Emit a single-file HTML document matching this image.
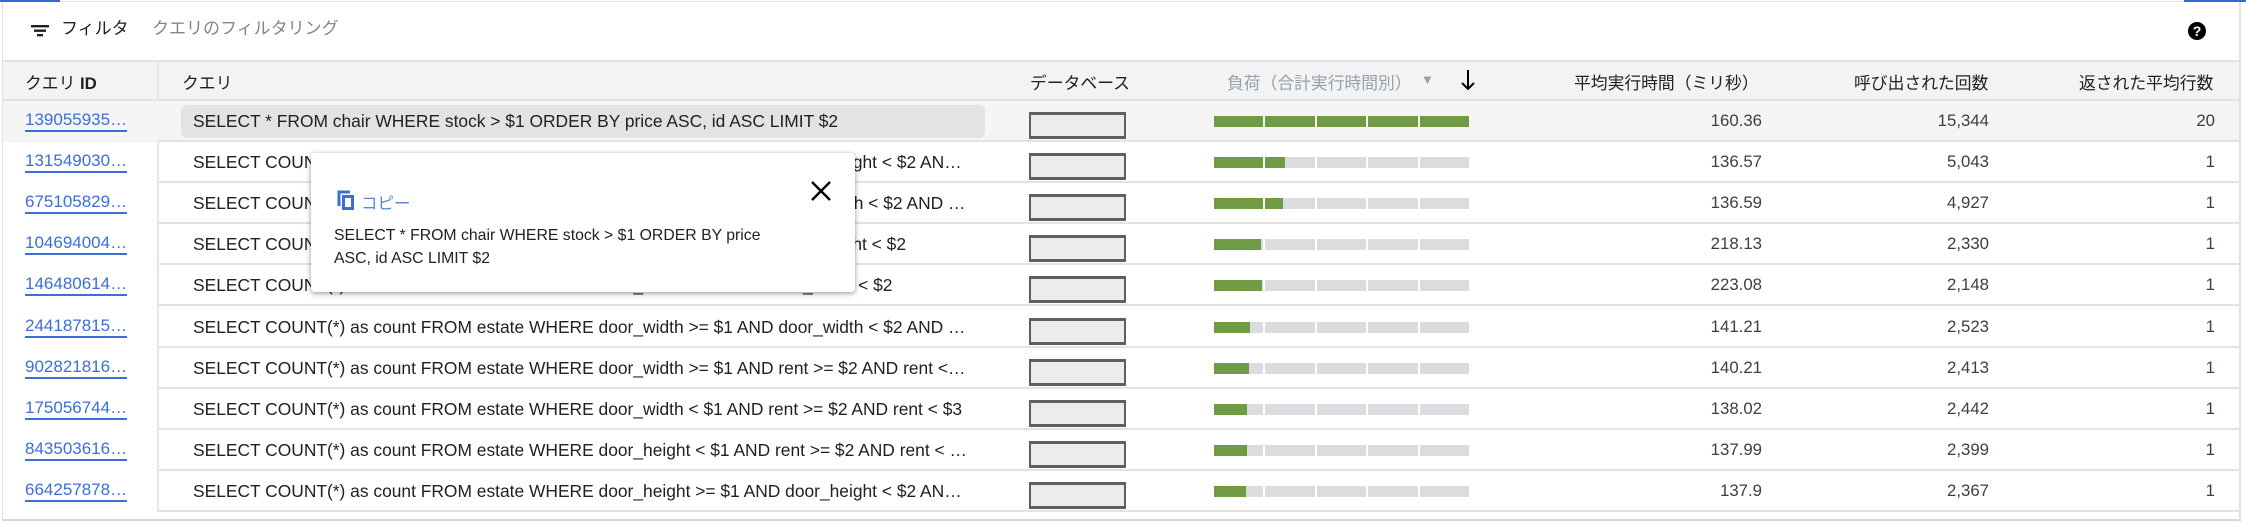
<!DOCTYPE html>
<html><head><meta charset="utf-8"><style>
*{margin:0;padding:0;box-sizing:border-box}
body{width:2246px;height:522px;overflow:hidden;background:#fff;font-family:"Liberation Sans","Noto Sans CJK JP",sans-serif;color:#202124;position:relative}
.a{position:absolute;white-space:nowrap}
.hdr{font-size:16.8px;color:#202124}
.row{position:absolute;left:158px;width:2082px;height:41px;border-bottom:2px solid #e3e3e3}
.id{position:absolute;left:25px;font-size:17px;color:#3b6fd8;border-bottom:2px solid #3b6fd8;line-height:20px}
.q{position:absolute;left:193px;font-size:17.4px;color:#202124}
.db{position:absolute;left:1029px;width:97px;height:27px;background:#ececec;border:2px solid #5f5f5f;border-top-width:3px;border-bottom-width:3px}
.bar{position:absolute;left:1214px;width:255px;height:11px;display:flex;gap:2px}
.seg{flex:1;background:#dadce0;position:relative;overflow:hidden}
.num{position:absolute;font-size:16.8px;color:#3c4043;text-align:right}
</style></head><body>
<div class="a" style="left:0;top:0;width:60px;height:2px;background:#3367d6"></div>
<div class="a" style="left:2184px;top:0;width:62px;height:2px;background:#3367d6"></div>
<div class="a" style="left:60px;top:1px;width:2124px;height:1px;background:#e0e0e0"></div>
<div class="a" style="left:2px;top:2px;width:1px;height:520px;background:#e0e0e0"></div>
<div class="a" style="left:2239px;top:2px;width:2px;height:520px;background:#e0e0e0"></div>
<svg class="a" style="left:31px;top:22px" width="18" height="16" viewBox="0 0 18 16"><rect x="0" y="3" width="18" height="2.4" fill="#202124"/><rect x="3" y="7.5" width="12" height="2.4" fill="#202124"/><rect x="6" y="12" width="6" height="2.4" fill="#202124"/></svg>
<div class="a" style="left:61px;top:18px;font-size:17px;line-height:22px">フィルタ</div>
<div class="a" style="left:152px;top:18px;font-size:17px;line-height:22px;color:#80868b">クエリのフィルタリング</div>
<svg class="a" style="left:2187px;top:21px" width="20" height="20" viewBox="0 0 20 20"><circle cx="10" cy="10" r="9" fill="#000"/><text x="10" y="15" font-size="14" font-weight="bold" text-anchor="middle" fill="#fff" font-family="Liberation Sans">?</text></svg>
<div class="a" style="left:3px;top:60px;width:2236px;height:41px;background:#f1f3f4;border-top:2px solid #e3e3e3;border-bottom:2px solid #e3e3e3"></div>
<div class="a" style="left:157px;top:60px;width:2px;height:452px;background:#e6e6e6"></div>
<div class="a hdr" style="left:25px;top:70px">クエリ <b>ID</b></div>
<div class="a hdr" style="left:182px;top:70px">クエリ</div>
<div class="a hdr" style="left:1030px;top:70px">データベース</div>
<div class="a hdr" style="left:1227px;top:70px;color:#9aa0a6">負荷（合計実行時間別）</div>
<div class="a" style="left:1421px;top:72px;font-size:13px;color:#9aa0a6">▼</div>
<svg class="a" style="left:1461px;top:69px" width="14" height="22" viewBox="0 0 14 22"><path d="M7 1V20M1 14L7 20L13 14" stroke="#000" stroke-width="2" fill="none"/></svg>
<div class="a hdr" style="left:1574px;top:70px">平均実行時間（ミリ秒）</div>
<div class="a hdr" style="left:1854px;top:70px">呼び出された回数</div>
<div class="a hdr" style="left:2079px;top:70px">返された平均行数</div>
<div id="rows"></div>
<div class="a" style="left:3px;top:519px;width:2236px;height:2px;background:#d8d8d8"></div>
<script>
var data=[
["139055935…","SELECT * FROM chair WHERE stock &gt; $1 ORDER BY price ASC, id ASC LIMIT $2",1,"160.36","15,344","20"],
["131549030…","SELECT COUNT(*) as count FROM estate WHERE door_height &gt;= $1 AND door_height &lt; $2 AN…",.28,"136.57","5,043","1"],
["675105829…","SELECT COUNT(*) as count FROM estate WHERE door_width &gt;= $1 AND door_width &lt; $2 AND …",.27,"136.59","4,927","1"],
["104694004…","SELECT COUNT(*) as count FROM estate WHERE door_height &lt; $1 AND door_height &lt; $2",.19,"218.13","2,330","1"],
["146480614…","SELECT COUNT(*) as count FROM estate WHERE door_width &lt; $1 AND door_width &lt; $2",.195,"223.08","2,148","1"],
["244187815…","SELECT COUNT(*) as count FROM estate WHERE door_width &gt;= $1 AND door_width &lt; $2 AND …",.145,"141.21","2,523","1"],
["902821816…","SELECT COUNT(*) as count FROM estate WHERE door_width &gt;= $1 AND rent &gt;= $2 AND rent &lt;…",.14,"140.21","2,413","1"],
["175056744…","SELECT COUNT(*) as count FROM estate WHERE door_width &lt; $1 AND rent &gt;= $2 AND rent &lt; $3",.135,"138.02","2,442","1"],
["843503616…","SELECT COUNT(*) as count FROM estate WHERE door_height &lt; $1 AND rent &gt;= $2 AND rent &lt; …",.135,"137.99","2,399","1"],
["664257878…","SELECT COUNT(*) as count FROM estate WHERE door_height &gt;= $1 AND door_height &lt; $2 AN…",.13,"137.9","2,367","1"]];
var h="";
data.forEach(function(d,i){
 var t=101+i*41.1;
 if(i==0){h+='<div class="a" style="left:3px;top:'+t+'px;width:2236px;height:41px;background:#f5f5f5"></div>';
  h+='<div class="a" style="left:181px;top:'+(t+4)+'px;width:804px;height:33px;background:#e3e3e3;border-radius:6px"></div>';}
 h+='<div class="row" style="top:'+t+'px"></div>';
 h+='<div class="id" style="top:'+(t+9)+'px">'+d[0]+'</div>';
 h+='<div class="a q" style="top:'+(t+10)+'px">'+d[1]+'</div>';
 h+='<div class="db" style="top:'+(t+11)+'px"></div>';
 var segs="",f=d[2]*5;
 for(var k=0;k<5;k++){var w=Math.max(0,Math.min(1,f-k));segs+='<div class="seg"><div style="position:absolute;left:0;top:0;bottom:0;width:'+(w*100)+'%;background:#6e9b43"></div></div>';}
 h+='<div class="bar" style="top:'+(t+15)+'px">'+segs+'</div>';
 h+='<div class="num" style="right:'+(2246-1762)+'px;top:'+(t+10)+'px">'+d[3]+'</div>';
 h+='<div class="num" style="right:'+(2246-1989)+'px;top:'+(t+10)+'px">'+d[4]+'</div>';
 h+='<div class="num" style="right:'+(2246-2215)+'px;top:'+(t+10)+'px">'+d[5]+'</div>';
});
document.getElementById("rows").innerHTML=h;
</script>
<div class="a" style="left:311px;top:153px;width:544px;height:139px;background:#fff;border-radius:4px;box-shadow:0 1px 4px rgba(0,0,0,.3),0 2px 8px rgba(0,0,0,.15)">
 <svg class="a" style="left:25px;top:36px" width="20" height="22" viewBox="0 0 20 22"><path d="M3 17V3h11" stroke="#3b6fd8" stroke-width="3" fill="none"/><rect x="7.5" y="7.5" width="9" height="12" stroke="#3b6fd8" stroke-width="3" fill="none"/></svg>
 <div class="a" style="left:50px;top:37px;font-size:16.5px;color:#5b87e0">コピー</div>
 <svg class="a" style="left:499px;top:27px" width="22" height="22" viewBox="0 0 22 22"><path d="M2 2L20 20M20 2L2 20" stroke="#000" stroke-width="2.4"/></svg>
 <div class="a" style="left:23px;top:71px;font-size:15.8px;line-height:23px;color:#202124">SELECT * FROM chair WHERE stock &gt; $1 ORDER BY price<br>ASC, id ASC LIMIT $2</div>
</div>
</body></html>
